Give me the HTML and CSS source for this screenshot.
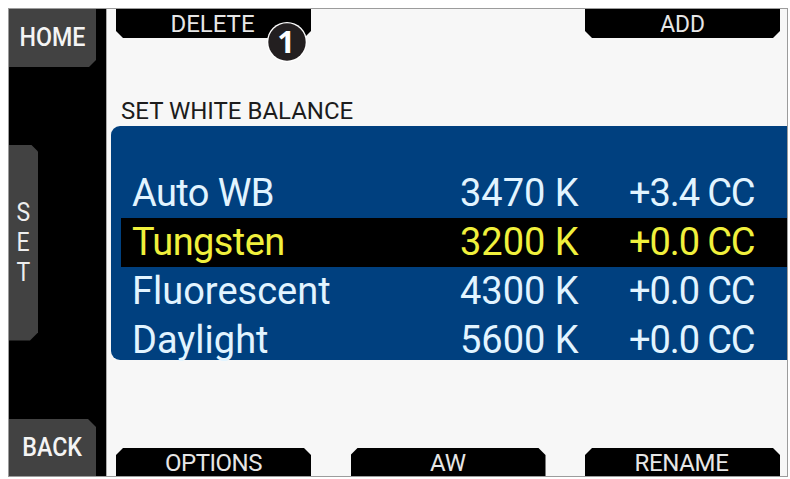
FILE: index.html
```
<!DOCTYPE html>
<html lang="en">
<head>
    <meta charset="UTF-8">
    <meta name="viewport" content="width=device-width, initial-scale=1.0">
    <title>Set White Balance</title>
    <link rel="stylesheet" href="styles.css">
</head>
<body>
    <div class="screen">
        <div class="sidebar">
            <div class="side-btn home"><span>HOME</span></div>
            <div class="side-tab"><span>S</span><span>E</span><span>T</span></div>
            <div class="side-btn back"><span>BACK</span></div>
        </div>
        <div class="main">
            <div class="tabs top">
                <div class="tab t-delete"><span>DELETE</span></div>
                <div class="tab t-add"><span>ADD</span></div>
                <div class="badge">
                    <svg width="40" height="40" viewBox="0 0 40 40">
                        <circle cx="20" cy="20" r="20" fill="#fff"/>
                        <circle cx="20" cy="20" r="18.7" fill="#231f20"/>
                    </svg>
                    <span>1</span>
                </div>
            </div>
            <div class="title"><span>SET WHITE BALANCE</span></div>
            <div class="list">
                <div class="row">
                    <div class="name tight">Auto WB</div>
                    <div class="kelvin">3470 K</div>
                    <div class="cc">+3.4 CC</div>
                </div>
                <div class="row selected">
                    <div class="name tight">Tungsten</div>
                    <div class="kelvin">3200 K</div>
                    <div class="cc">+0.0 CC</div>
                </div>
                <div class="row">
                    <div class="name">Fluorescent</div>
                    <div class="kelvin">4300 K</div>
                    <div class="cc">+0.0 CC</div>
                </div>
                <div class="row">
                    <div class="name">Daylight</div>
                    <div class="kelvin">5600 K</div>
                    <div class="cc">+0.0 CC</div>
                </div>
            </div>
            <div class="tabs bottom">
                <div class="tab t-options"><span>OPTIONS</span></div>
                <div class="tab"><span>AW</span></div>
                <div class="tab t-rename"><span>RENAME</span></div>
            </div>
        </div>
    </div>
</body>
</html>
```
FILE: styles.css
```
* {
    box-sizing: border-box;
}

body {
    margin: 0;
    padding: 8px 0 0 8px;
    height: 479px;
    background: #fff;
    font-family: Roboto, "Liberation Sans", sans-serif;
    overflow: hidden;
}

.screen {
    display: flex;
    width: 780px;
    height: 469px;
    border: 1px solid #9c9c9c;
    background: #f7f7f7;
}

/* left bar */
.sidebar {
    display: flex;
    flex-direction: column;
    justify-content: space-between;
    width: 97px;
    background: #000;
}

.side-btn {
    display: flex;
    align-items: center;
    justify-content: center;
    width: 87px;
    background: #424242;
    color: #f4f4f4;
    font-size: 25px;
    font-weight: 500;
    line-height: 30px;
}

.side-btn span {
    transform: scaleX(0.93);
}

.home {
    height: 58px;
    clip-path: polygon(0 0, 100% 0, 100% calc(100% - 7px), calc(100% - 7px) 100%, 0 100%);
}

.back {
    height: 57px;
    padding-right: 1px;
    clip-path: polygon(0 0, calc(100% - 8px) 0, 100% 8px, 100% 100%, 0 100%);
}

.side-tab {
    display: flex;
    flex-direction: column;
    align-items: center;
    justify-content: center;
    width: 29px;
    height: 196px;
    margin-top: -1px;
    background: #424242;
    color: #eee;
    font-size: 25px;
    line-height: 30px;
    clip-path: polygon(0 0, calc(100% - 7px) 0, 100% 7px, 100% calc(100% - 8px), calc(100% - 8px) 100%, 0 100%);
}

.side-tab span {
    transform: scaleX(0.92);
}

/* right side */
.main {
    display: flex;
    flex-direction: column;
    flex: 1;
    border-left: 1px solid #aaa;
}

.tabs {
    display: flex;
    justify-content: space-between;
    position: relative;
    padding: 0 7px 0 9px;
}

.tab {
    display: flex;
    justify-content: center;
    width: 195px;
    height: 29px;
    background: #000;
    color: #e6e6e6;
    font-size: 24px;
    line-height: 30px;
}

.top .tab {
    clip-path: polygon(0 0, 100% 0, 100% 22px, calc(100% - 7px) 100%, 7px 100%, 0 22px);
}

.bottom .tab {
    height: 28px;
    clip-path: polygon(7px 0, calc(100% - 7px) 0, 100% 7px, 100% 100%, 0 100%, 0 7px);
}

.t-delete {
    padding-right: 2px;
}

.t-add span {
    transform: scaleX(0.95);
}

.t-options {
    letter-spacing: -0.5px;
}

.t-rename {
    padding-right: 2px;
    letter-spacing: -0.3px;
}

.badge {
    position: absolute;
    left: 160px;
    top: 13px;
    width: 40px;
    height: 40px;
}

.badge svg {
    display: block;
}

.badge span {
    position: absolute;
    left: 0;
    top: 0;
    width: 38px;
    color: #fff;
    font-family: "Open Sans", sans-serif;
    font-size: 31px;
    font-weight: 700;
    line-height: 38px;
    text-align: center;
}

.title {
    height: 88px;
    padding: 59px 0 0 14px;
    color: #1c1c1c;
    font-size: 24px;
    line-height: 29px;
    white-space: nowrap;
}

.list {
    height: 234px;
    margin-left: 4px;
    padding: 43px 0 0 10px;
    border-radius: 9px 0 0 9px;
    background: #00407f;
    color: #e2f4ff;
    font-size: 38px;
    line-height: 49px;
}

.row {
    display: flex;
    height: 49px;
    padding-left: 11px;
    white-space: nowrap;
}

.selected {
    background: #000;
    color: #f0f03c;
}

.name {
    width: 328px;
}

.tight {
    letter-spacing: -0.6px;
}

.kelvin {
    width: 169px;
}

.cc {
    letter-spacing: -1.1px;
}

.bottom {
    margin-top: auto;
}
```
